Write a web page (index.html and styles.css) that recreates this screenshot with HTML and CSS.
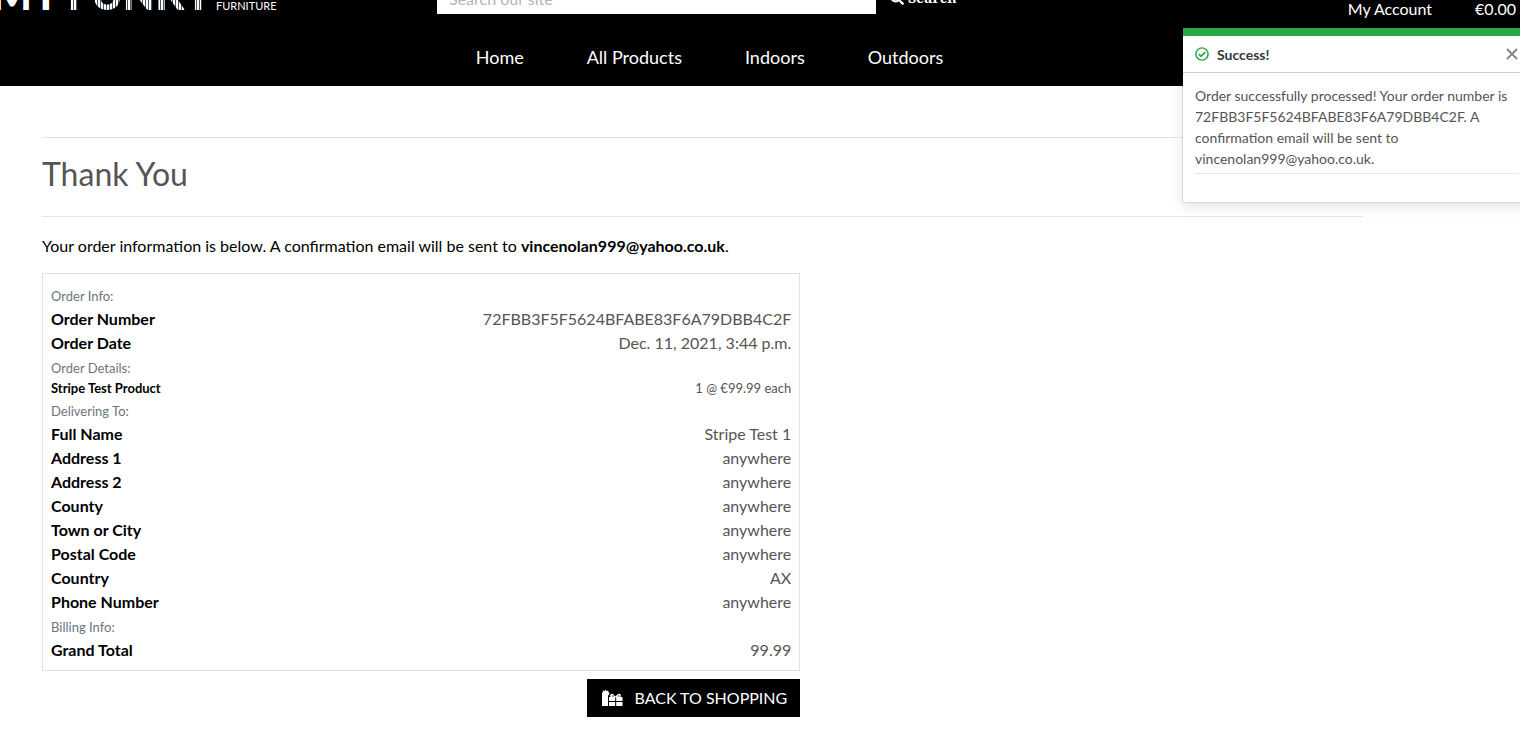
FILE: index.html
```html
<!DOCTYPE html>
<html lang="en">
<head>
<meta charset="utf-8">
<meta name="viewport" content="width=device-width, initial-scale=1">
<title>My Funky Furniture - Thank You</title>
<link rel="stylesheet" href="styles.css">
</head>
<body>
<header class="site-header">
  <div class="top-bar">
    <a class="brand" href="#"><span class="brand-my">MY</span><span class="brand-funky">FUNKY</span><span class="brand-sub">FURNITURE</span></a>
    <form class="search">
      <input class="search-input" type="search" placeholder="Search our site" aria-label="Search our site">
      <button class="search-button" type="button">
        <svg class="search-icon" viewBox="0 0 512 512" aria-hidden="true"><path fill="currentColor" d="M505 442.700 405.300 343c-4.500-4.500-10.600-7-17-7H372c27.600-35.300 44-79.700 44-128C416 93.100 322.900 0 208 0S0 93.100 0 208s93.100 208 208 208c48.300 0 92.700-16.400 128-44v16.300c0 6.400 2.500 12.500 7 17l99.700 99.700c9.400 9.400 24.600 9.400 33.900 0l28.300-28.300c9.400-9.400 9.400-24.600.1-34zM208 336c-70.700 0-128-57.200-128-128 0-70.700 57.200-128 128-128 70.700 0 128 57.200 128 128 0 70.700-57.200 128-128 128z"/></svg>
        <span>Search</span>
      </button>
    </form>
    <div class="account">
      <a href="#">My Account</a>
      <a href="#">€0.00</a>
    </div>
  </div>
  <nav class="main-nav" aria-label="Main">
    <a href="#">Home</a>
    <a href="#">All Products</a>
    <a href="#">Indoors</a>
    <a href="#">Outdoors</a>
  </nav>
</header>

<aside class="toast" role="status">
  <div class="toast-header">
    <svg class="toast-icon" viewBox="0 0 16 16" aria-hidden="true"><circle cx="8" cy="8" r="7" fill="none" stroke="currentColor" stroke-width="1.700"/><path d="M4.400 8.200 7 10.700 11.700 5.800" fill="none" stroke="currentColor" stroke-width="2"/></svg>
    <strong>Success!</strong>
    <button class="toast-close" type="button" aria-label="Close"><svg viewBox="0 0 12 12" aria-hidden="true"><path d="M1 1l10 10M11 1 1 11" stroke="currentColor" stroke-width="2"/></svg></button>
  </div>
  <div class="toast-body">
    <p>Order successfully processed! Your order number is 72FBB3F5F5624BFABE83F6A79DBB4C2F. A confirmation email will be sent to vincenolan999@yahoo.co.uk.</p>
  </div>
</aside>

<main class="page">
  <h1 class="page-title">Thank You</h1>
  <p class="intro">Your order information is below. A confirmation email will be sent to <strong>vincenolan999@yahoo.co.uk</strong>.</p>
  <div class="order-column">
    <section class="order">
      <h2>Order Info:</h2>
      <dl>
        <div><dt>Order Number</dt><dd>72FBB3F5F5624BFABE83F6A79DBB4C2F</dd></div>
        <div><dt>Order Date</dt><dd>Dec. 11, 2021, 3:44 p.m.</dd></div>
      </dl>
      <h2>Order Details:</h2>
      <dl class="items">
        <div><dt>Stripe Test Product</dt><dd>1 @ €99.99 each</dd></div>
      </dl>
      <h2>Delivering To:</h2>
      <dl>
        <div><dt>Full Name</dt><dd>Stripe Test 1</dd></div>
        <div><dt>Address 1</dt><dd>anywhere</dd></div>
        <div><dt>Address 2</dt><dd>anywhere</dd></div>
        <div><dt>County</dt><dd>anywhere</dd></div>
        <div><dt>Town or City</dt><dd>anywhere</dd></div>
        <div><dt>Postal Code</dt><dd>anywhere</dd></div>
        <div><dt>Country</dt><dd>AX</dd></div>
        <div><dt>Phone Number</dt><dd>anywhere</dd></div>
      </dl>
      <h2>Billing Info:</h2>
      <dl>
        <div><dt>Grand Total</dt><dd>99.99</dd></div>
      </dl>
    </section>
    <a class="back-button" href="#">
      <svg class="gifts-icon" viewBox="0 0 22 18" aria-hidden="true"><path fill="currentColor" d="M1 4 2 3 1.500 1.500 3.500 2 4.500 .8 5.500 2 7.500 1.500 7.200 3 8.800 4.200 7 7V17H1.500Q1 17 1 16.500zM8 8h1.500L9 6.500Q10 4 12 5l2.300 2.500L17 5q2.500-1 3 1.500L19.500 8H21.500v4H15.200V8.500h-1V12H8zM8 13h6.200v4H8zM15.200 13h6.300v4h-6.300z"/><path d="M11 7h1.500M17 7h1.500" stroke="#000" stroke-width="1"/></svg>
      <span>BACK TO SHOPPING</span>
    </a>
  </div>
</main>
</body>
</html>
```
FILE: styles.css
```css
* {
  box-sizing: border-box;
}

body {
  margin: 0;
  background: #fff;
  color: #555;
  font-family: Lato, "Open Sans", sans-serif;
  font-size: 16px;
  line-height: 24px;
  overflow-x: hidden;
}

a {
  color: inherit;
  text-decoration: none;
}

p, h1, h2, dl, dd {
  margin: 0;
}

.site-header {
  margin-top: -24px;
  background: #000;
  color: #fff;
}

.top-bar {
  display: grid;
  grid-template-columns: 437px minmax(0, 1fr) auto;
  align-items: end;
  height: 54px;
  padding-right: 4px;
}

.brand {
  display: flex;
  align-items: baseline;
  padding-bottom: 16px;
  overflow: hidden;
  font-size: 42px;
  font-weight: 900;
  line-height: 40px;
  white-space: nowrap;
}

.brand-my {
  margin: 0 8px 0 -8px;
}

.brand-funky {
  margin-right: 4px;
  background: repeating-linear-gradient(90deg, #fff 0 2px, #456 2px 3px);
  background-clip: text;
  color: transparent;
}

.brand-sub {
  font-size: 11px;
  font-weight: 400;
  line-height: 16px;
}

.search {
  display: flex;
  align-items: flex-end;
  padding-bottom: 16px;
}

.search-input {
  width: 439px;
  height: 32px;
  padding: 0 12px;
  border: 0;
  border-radius: 0;
  background: #fff;
  color: #555;
  font: 16px/24px Lato, sans-serif;
}

.search-input::placeholder {
  color: #aab7c4;
}

.search-button {
  display: flex;
  align-items: center;
  gap: 4px;
  height: 32px;
  padding: 0 14px;
  border: 0;
  background: #000;
  color: #fff;
  font: 700 14px/20px "Noto Serif", "DejaVu Serif", serif;
}

.search-icon {
  width: 14px;
  height: 14px;
}

.account {
  display: flex;
  gap: 43px;
  padding-bottom: 9px;
}

.main-nav {
  display: flex;
  justify-content: center;
  gap: 63px;
  padding: 15px 101px 17px 0;
  font-size: 18px;
}

.toast {
  position: absolute;
  top: 28px;
  right: -12px;
  width: 350px;
  border: 1px solid rgba(0, 0, 0, 0.1);
  border-top: 0;
  background: #fff;
  background-clip: padding-box;
  box-shadow: 0 4px 12px rgba(0, 0, 0, 0.1);
  font-size: 14px;
  line-height: 21px;
}

.toast-header {
  display: flex;
  align-items: center;
  gap: 8px;
  height: 45px;
  padding: 0 13px 0 12px;
  border-top: 8px solid #28a745;
  border-bottom: 1px solid #ccc;
  color: #343a40;
}

.toast-icon {
  width: 14px;
  height: 14px;
  color: #28a745;
}

.toast-close {
  display: flex;
  margin-left: auto;
  padding: 0;
  border: 0;
  background: none;
  color: #888;
}

.toast-close svg {
  width: 12px;
  height: 12px;
}

.toast-body {
  padding: 12px 12px 28px;
}

.toast-body p {
  padding-bottom: 4px;
  border-bottom: 1px solid #e5e5e5;
}

.page {
  padding: 51px 157px 20px 42px;
}

.page-title {
  padding: 16px 0 22px;
  border: 1px solid #e5e5e5;
  border-width: 1px 0;
  font-size: 32px;
  font-weight: 400;
  line-height: 40px;
}

.intro {
  padding: 17px 0 15px;
  color: #000;
}

.order-column {
  display: flex;
  flex-direction: column;
  align-items: flex-end;
  gap: 8px;
  width: 57.400%;
}

.order {
  width: 100%;
  padding: 9px 8px 8px;
  border: 1px solid #dee2e6;
}

.order h2 {
  padding-top: 2px;
  color: #6c757d;
  font-size: 13px;
  font-weight: 400;
  line-height: 22px;
}

.order dl > div {
  display: flex;
  justify-content: space-between;
}

.order dt {
  color: #000;
  font-weight: 700;
}

.order .items {
  font-size: 13px;
  line-height: 19px;
}

.back-button {
  display: flex;
  align-items: center;
  gap: 11px;
  height: 38px;
  padding: 0 13px 0 14px;
  background: #000;
  color: #fff;
}

.gifts-icon {
  width: 22px;
  height: 18px;
}
```
